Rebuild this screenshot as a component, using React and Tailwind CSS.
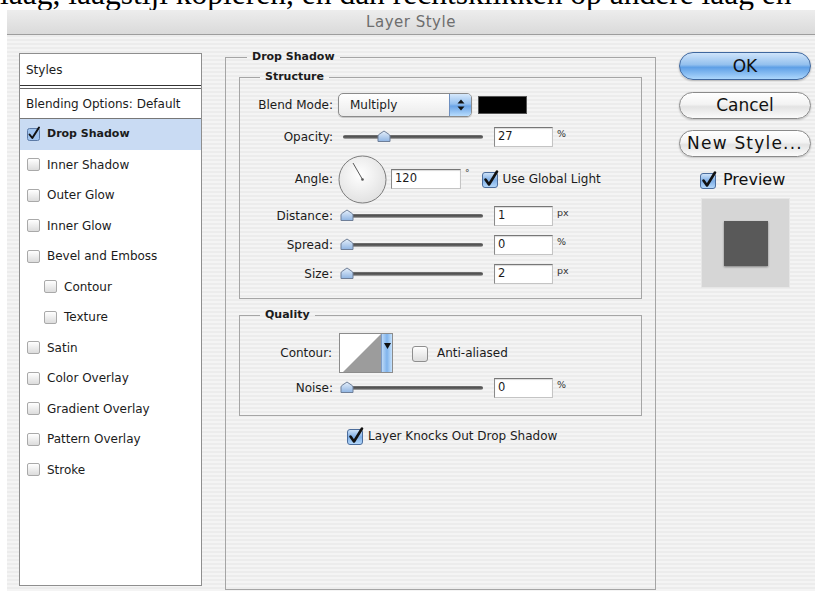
import React from 'react';
import clsx from 'clsx';

// effect list shown in the left column
const effects = [
    { name: 'Drop Shadow', on: true },
    { name: 'Inner Shadow' },
    { name: 'Outer Glow' },
    { name: 'Inner Glow' },
    { name: 'Bevel and Emboss' },
    { name: 'Contour', sub: true },
    { name: 'Texture', sub: true },
    { name: 'Satin' },
    { name: 'Color Overlay' },
    { name: 'Gradient Overlay' },
    { name: 'Pattern Overlay' },
    { name: 'Stroke' },
];

function AquaCheck({ checked = true }) {
    return (
        <svg width="17" height="17" viewBox="0 0 17 17" className="shrink-0 overflow-visible">
            <defs>
                <linearGradient id="aquaFill" x1="0" y1="0" x2="0" y2="1">
                    <stop offset="0" stopColor="#d3e6fa" />
                    <stop offset="0.5" stopColor="#7eaee6" />
                    <stop offset="1" stopColor="#b7dafc" />
                </linearGradient>
                <linearGradient id="plainFill" x1="0" y1="0" x2="0" y2="1">
                    <stop offset="0" stopColor="#ffffff" />
                    <stop offset="1" stopColor="#dcdcdc" />
                </linearGradient>
            </defs>
            <rect x="0.5" y="1.5" width="15" height="15" rx="2.5" fill={checked ? 'url(#aquaFill)' : 'url(#plainFill)'} stroke={checked ? '#4c6d9c' : '#8e8e8e'} />
            {checked && (
                <path d="M3.5 8.5 L7 13.5 L15 0.5" fill="none" stroke="#111" strokeWidth="2.6" strokeLinecap="round" strokeLinejoin="round" />
            )}
        </svg>
    );
}

function ListBox({ checked }) {
    if (checked) {
        return (
            <svg width="13" height="13" viewBox="0 0 13 13" className="shrink-0 overflow-visible">
                <rect x="0.5" y="0.5" width="12" height="12" rx="2" fill="#9fc3ee" stroke="#5c7aa6" />
                <path d="M2.5 6.5 L5.3 10 L12 -0.5" fill="none" stroke="#111" strokeWidth="2" strokeLinecap="round" strokeLinejoin="round" />
            </svg>
        );
    }
    return <span className="h-[13px] w-[13px] shrink-0 rounded-[2px] border border-[#a9a9a9] bg-linear-to-b from-white to-[#dcdcdc]" />;
}

function Slider({ pct }) {
    return (
        <div className="relative ml-[6px] h-[20px] w-[144px] shrink-0">
            <div className="absolute left-[4px] right-0 top-[8px] h-[4px] rounded-full bg-linear-to-b from-[#7a7a7a] via-[#474747] to-[#b8b8b8]" />
            <svg className="absolute top-[3px]" style={{ left: 1 + pct * 1.36 }} width="14" height="12" viewBox="0 0 14 12">
                <defs>
                    <linearGradient id="thumbFill" x1="0" y1="0" x2="0" y2="1">
                        <stop offset="0" stopColor="#e6f0fb" />
                        <stop offset="1" stopColor="#8fb4e2" />
                    </linearGradient>
                </defs>
                <path d="M1 11.5 V6 Q1 5 2 4.4 L7 1 L12 4.4 Q13 5 13 6 V11.5 Z" fill="url(#thumbFill)" stroke="#6f7f98" />
            </svg>
        </div>
    );
}

function NumField({ value, className = 'ml-[11px] w-[59px]' }) {
    return (
        <div className={clsx('flex h-[20px] shrink-0 items-center border border-t-[#777] border-l-[#8a8a8a] border-r-[#c4c4c4] border-b-[#c4c4c4] bg-white pl-[3px] text-[11.5px] shadow-[inset_0_1px_1px_rgba(0,0,0,0.15)]', className)}>
            {value}
        </div>
    );
}

function Unit({ children }) {
    return <span className="mb-[6px] ml-[4px] text-[9.5px] text-[#333]">{children}</span>;
}

function Label({ children, className = 'w-[93px]' }) {
    return <span className={clsx('shrink-0 text-right', className)}>{children}</span>;
}

function SliderRow({ label, pct, value, unit, className }) {
    return (
        <div className={clsx('flex h-[20px] items-center', className)}>
            <Label>{label}</Label>
            <Slider pct={pct} />
            <NumField value={value} />
            <Unit>{unit}</Unit>
        </div>
    );
}

function Dial() {
    // angle dial, hand at 120 degrees
    return (
        <svg width="49" height="49" viewBox="0 0 49 49" className="ml-[5px] shrink-0">
            <defs>
                <radialGradient id="dialFill" cx="0.45" cy="0.4" r="0.6">
                    <stop offset="0" stopColor="#ffffff" />
                    <stop offset="1" stopColor="#e2e2e2" />
                </radialGradient>
            </defs>
            <circle cx="24.5" cy="24.5" r="23.5" fill="url(#dialFill)" stroke="#7c7c7c" />
            <line x1="24.5" y1="24.5" x2="15" y2="8" stroke="#5a5a5a" strokeWidth="1" />
            <circle cx="24.5" cy="24.5" r="1.3" fill="#555" />
        </svg>
    );
}

function BlendSelect() {
    return (
        <div className="ml-[5px] flex h-[24px] w-[134px] shrink-0 overflow-hidden rounded-[5px] border border-[#8b8b8b] bg-linear-to-b from-white to-[#ebebeb] shadow-[0_1px_1px_rgba(0,0,0,0.2)]">
            <span className="flex flex-1 items-center pl-[11px]">Multiply</span>
            <span className="flex w-[22px] items-center justify-center border-l border-[#6d8fc0] bg-[linear-gradient(180deg,#d6e8fb_0%,#95c0ef_45%,#6aa3e6_55%,#b7dcfd_100%)]">
                <svg width="8" height="12" viewBox="0 0 8 12">
                    <path d="M4 0.5 L7.5 4.5 H0.5 Z M4 11.5 L7.5 7.5 H0.5 Z" fill="#111" />
                </svg>
            </span>
        </div>
    );
}

function ContourPicker() {
    return (
        <div className="ml-[7px] flex h-[40px] w-[54px] shrink-0 border border-[#8c8c8c] bg-white">
            <svg width="41" height="38" viewBox="0 0 41 38">
                <polygon points="3,38 41,0 41,38" fill="#9c9c9c" />
            </svg>
            <span className="flex flex-1 justify-center border-l border-[#7d9cc8] bg-[linear-gradient(90deg,#bcd9f8_0%,#7fb3ec_50%,#c6e2fd_100%)] pt-[9px]">
                <svg width="7" height="6" viewBox="0 0 7 6">
                    <path d="M0 0 H7 L3.5 6 Z" fill="#111" />
                </svg>
            </span>
        </div>
    );
}

function StyleList() {
    return (
        <div className="ml-[12px] mt-[18px] h-[533px] w-[183px] shrink-0 border border-[#8e8e8e] bg-white text-[12px]">
            <div className="flex h-[31px] items-center pl-[6px]">Styles</div>
            <div className="h-px bg-[#333]" />
            <div className="h-[2px]" />
            <div className="h-px bg-[#666]" />
            <div className="flex h-[29px] items-center pl-[6px]">Blending Options: Default</div>
            <div className="h-px bg-[#777]" />
            {effects.map((e) => (
                <div
                    key={e.name}
                    className={clsx(
                        'flex h-[30.5px] items-center gap-[7px]',
                        e.sub ? 'pl-[24px]' : 'pl-[7px]',
                        e.on && 'bg-[#c9dbf3] text-[11px] font-bold'
                    )}
                >
                    <ListBox checked={e.on} />
                    <span>{e.name}</span>
                </div>
            ))}
        </div>
    );
}

function DropShadowPanel() {
    return (
        <fieldset className="ml-[23px] mt-[14px] h-[541px] w-[431px] shrink-0 border border-[#a5a5a5] p-0 text-[12px]">
            <legend className="ml-[21px] px-[5px] text-[11px] font-bold leading-[16px]">Drop Shadow</legend>
            <div className="px-[13px] pt-[4px]">
                {/* Structure */}
                <fieldset className="h-[230px] border border-[#a5a5a5] p-0">
                    <legend className="ml-[20px] px-[5px] text-[11px] font-bold leading-[16px]">Structure</legend>
                    <div className="flex flex-col">
                        <div className="mt-[8px] flex h-[24px] items-center">
                            <Label>Blend Mode:</Label>
                            <BlendSelect />
                            <span className="ml-[6px] h-[18px] w-[49px] shrink-0 border border-[#555] bg-black" />
                        </div>
                        <SliderRow className="mt-[10px]" label="Opacity:" pct={27} value="27" unit="%" />
                        <div className="mt-[8px] flex h-[48px] items-center">
                            <Label>Angle:</Label>
                            <Dial />
                            <NumField value="120" className="ml-[4px] w-[70px]" />
                            <span className="mb-[10px] ml-[4px] text-[9px] text-[#333]">°</span>
                            <span className="ml-[12px] flex items-center gap-[4px]">
                                <AquaCheck />
                                <span>Use Global Light</span>
                            </span>
                        </div>
                        <SliderRow className="mt-[3px]" label="Distance:" pct={0} value="1" unit="px" />
                        <SliderRow className="mt-[9px]" label="Spread:" pct={0} value="0" unit="%" />
                        <SliderRow className="mt-[9px]" label="Size:" pct={0} value="2" unit="px" />
                    </div>
                </fieldset>

                {/* Quality */}
                <fieldset className="mt-[8px] h-[109px] border border-[#a5a5a5] p-0">
                    <legend className="ml-[20px] px-[5px] text-[11px] font-bold leading-[16px]">Quality</legend>
                    <div className="flex flex-col">
                        <div className="mt-[10px] flex h-[40px] items-center">
                            <Label className="w-[92px]">Contour:</Label>
                            <ContourPicker />
                            <span className="ml-[19px] flex items-center gap-[8px]">
                                <AquaCheck checked={false} />
                                <span>Anti-aliased</span>
                            </span>
                        </div>
                        <SliderRow className="mt-[5px]" label="Noise:" pct={0} value="0" unit="%" />
                    </div>
                </fieldset>

                <div className="mt-[12px] flex h-[16px] items-center gap-[4px] pl-[108px]">
                    <AquaCheck />
                    <span>Layer Knocks Out Drop Shadow</span>
                </div>
            </div>
        </fieldset>
    );
}

function Buttons() {
    return (
        <div className="ml-[23px] mt-[17px] flex w-[132px] shrink-0 flex-col text-[17px] text-[#111]">
            <button className="h-[28px] rounded-full border border-[#3f679e] bg-[linear-gradient(180deg,#cfe4fa_0%,#93c0ee_45%,#5e9fe6_55%,#acd6fc_100%)] leading-none shadow-[0_1px_2px_rgba(0,0,0,0.25)]">
                OK
            </button>
            <button className="mt-[12px] h-[27px] rounded-full border border-[#8a8a8a] bg-[linear-gradient(180deg,#ffffff_0%,#f3f3f3_45%,#e3e3e3_55%,#fbfbfb_100%)] leading-none shadow-[0_1px_2px_rgba(0,0,0,0.2)]">
                Cancel
            </button>
            <button className="mt-[11px] h-[27px] whitespace-nowrap rounded-full border border-[#8a8a8a] bg-[linear-gradient(180deg,#ffffff_0%,#f3f3f3_45%,#e3e3e3_55%,#fbfbfb_100%)] leading-none tracking-[1.2px] shadow-[0_1px_2px_rgba(0,0,0,0.2)]">
                New Style...
            </button>
            <div className="mt-[14px] flex h-[18px] items-center gap-[6px] pl-[21px] text-[16px]">
                <AquaCheck />
                <span>Preview</span>
            </div>
            <div className="ml-[22px] mt-[9px] flex h-[90px] w-[89px] items-center justify-center border border-[#e6e6e6] bg-[#d6d6d6]">
                <div className="h-[45px] w-[44px] bg-[#595959] shadow-[0_1px_2px_rgba(0,0,0,0.4)]" />
            </div>
        </div>
    );
}

export default function App() {
    return (
        <div className="relative h-[591px] w-[815px] overflow-hidden bg-white font-['DejaVu_Sans',sans-serif] text-[#1b1b1b]">
            {/* tail of the article line above the dialog */}
            <div className="h-[10px] overflow-hidden">
                <p className="-mt-[22px] whitespace-nowrap font-['Liberation_Serif',serif] text-[31.5px] leading-none text-black">
                    laag, laagstijl kopiëren, en dan rechtsklikken op andere laag en
                </p>
            </div>
            <div className="ml-[7px] flex h-[581px] flex-col">
                <div className="flex h-[25px] shrink-0 items-center justify-center border-b border-[#9d9d9d] bg-linear-to-b from-[#ededed] to-[#dadada] text-[15px] tracking-[0.5px] text-[#6e6e6e]">
                    Layer Style
                </div>
                <div className="flex flex-1 items-start bg-[image:repeating-linear-gradient(180deg,#ececec_0px,#ececec_2px,#f4f4f4_2px,#f4f4f4_4px)]">
                    <StyleList />
                    <DropShadowPanel />
                    <Buttons />
                </div>
            </div>
        </div>
    );
}
